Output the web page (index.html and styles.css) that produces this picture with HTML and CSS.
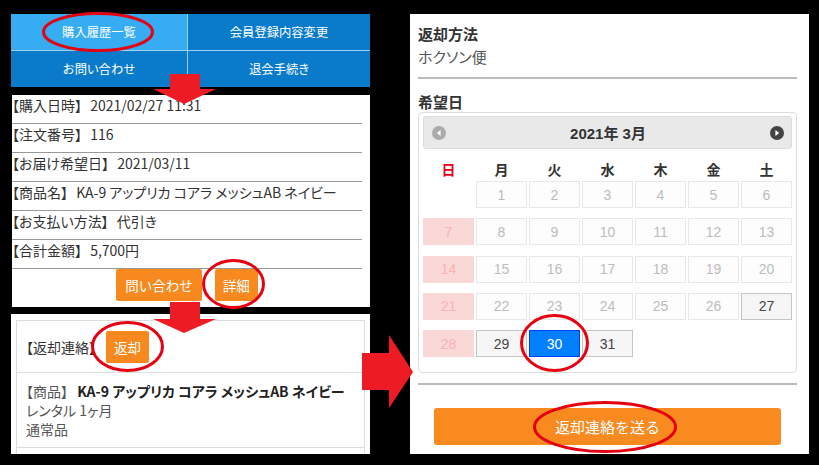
FILE: index.html
```html
<!DOCTYPE html>
<html lang="ja">
<head>
  <meta charset="UTF-8" />
  <meta name="viewport" content="width=device-width, initial-scale=1.0"/>
  <title>返却連絡の手順</title>
  <link rel="stylesheet" href="styles.css">
</head>
<body>
  <div class="page">
    <div class="left">
      <nav class="menu">
        <a class="menu-item is-current">購入履歴一覧</a>
        <a class="menu-item">会員登録内容変更</a>
        <a class="menu-item">お問い合わせ</a>
        <a class="menu-item">退会手続き</a>
      </nav>

      <section class="order">
        <ul class="order-list">
          <li>【購入日時】 <span>2021/02/27 11:31</span></li>
          <li>【注文番号】 <span>116</span></li>
          <li>【お届け希望日】 <span>2021/03/11</span></li>
          <li>【商品名】 <span>KA-9 アップリカ コアラ メッシュAB ネイビー</span></li>
          <li>【お支払い方法】 <span>代引き</span></li>
          <li>【合計金額】 <span>5,700円</span></li>
        </ul>
        <div class="order-actions">
          <button class="btn">問い合わせ</button>
          <button class="btn">詳細</button>
        </div>
      </section>

      <section class="return">
        <div class="return-box">
          <div class="return-head">
            <span>【返却連絡】</span>
            <button class="btn">返却</button>
          </div>
          <div class="return-item">
            <p>【商品】 <strong>KA-9 アップリカ コアラ メッシュAB ネイビー</strong></p>
            <p>レンタル 1ヶ月</p>
            <p>通常品</p>
          </div>
        </div>
      </section>
    </div>

    <section class="form">
      <h3 class="form-label">返却方法</h3>
      <p class="form-value">ホクソン便</p>
      <hr class="form-line">

      <h3 class="form-label">希望日</h3>
      <div class="calendar">
        <div class="cal-head">
          <span class="cal-nav is-off">
            <svg width="14" height="14" viewBox="0 0 14 14"><circle cx="7" cy="7" r="7" fill="#9c9c9c"/><path d="M8.6 4 L4.8 7 L8.6 10 Z" fill="#fff"/></svg>
          </span>
          <span class="cal-title">2021年 3月</span>
          <span class="cal-nav">
            <svg width="14" height="14" viewBox="0 0 14 14"><circle cx="7" cy="7" r="7" fill="#444"/><path d="M5.4 4 L9.2 7 L5.4 10 Z" fill="#fff"/></svg>
          </span>
        </div>
        <div class="cal-week">
          <span class="sun">日</span><span>月</span><span>火</span><span>水</span><span>木</span><span>金</span><span>土</span>
        </div>
        <div class="cal-days">
          <span class="day empty"></span>
          <span class="day off">1</span><span class="day off">2</span><span class="day off">3</span><span class="day off">4</span><span class="day off">5</span><span class="day off">6</span>
          <span class="day sunday">7</span>
          <span class="day off">8</span><span class="day off">9</span><span class="day off">10</span><span class="day off">11</span><span class="day off">12</span><span class="day off">13</span>
          <span class="day sunday">14</span>
          <span class="day off">15</span><span class="day off">16</span><span class="day off">17</span><span class="day off">18</span><span class="day off">19</span><span class="day off">20</span>
          <span class="day sunday">21</span>
          <span class="day off">22</span><span class="day off">23</span><span class="day off">24</span><span class="day off">25</span><span class="day off">26</span>
          <span class="day">27</span>
          <span class="day sunday">28</span>
          <span class="day">29</span>
          <span class="day selected">30</span>
          <span class="day">31</span>
        </div>
      </div>
      <hr class="form-line bottom">

      <button class="send">返却連絡を送る</button>
    </section>
  </div>

  <svg class="marks" width="819" height="465" viewBox="0 0 819 465">
    <g fill="#ed1c24">
      <polygon points="170,74 200,74 200,89 216,89 184,104 153,89 170,89"/>
      <polygon points="170,302 200,302 200,319 216,319 184,333 153,319 170,319"/>
      <polygon points="362,353 389,353 389,335 413,372 389,408 389,390 362,390"/>
    </g>
    <g fill="none" stroke="#e50012" stroke-width="3">
      <ellipse cx="98" cy="32" rx="54.5" ry="18.5"/>
      <ellipse cx="233.5" cy="284" rx="30" ry="23.5"/>
      <ellipse cx="127.5" cy="346.5" rx="35" ry="24"/>
      <ellipse cx="554.5" cy="343" rx="33" ry="27.5"/>
      <ellipse cx="605" cy="427" rx="70.5" ry="24.5"/>
    </g>
  </svg>
</body>
</html>
```

FILE: styles.css
```css
* {
  margin: 0;
  padding: 0;
  box-sizing: border-box;
}

body {
  width: 819px;
  height: 465px;
  background: #000;
  color: #333;
  font-family: "Noto Sans CJK JP", "Noto Sans", sans-serif;
  font-feature-settings: "palt";
  overflow: hidden;
  position: relative;
}

.page {
  display: flex;
  gap: 40px;
  padding: 14px 0 0 11px;
}

.left {
  width: 359px;
  display: flex;
  flex-direction: column;
}

/* top menu */
.menu {
  display: grid;
  grid-template-columns: 176px 1fr;
  grid-template-rows: 36px 36px;
  gap: 1px;
  background: #9bd0f2;
  height: 73px;
}

.menu-item {
  display: flex;
  align-items: center;
  justify-content: center;
  background: #0a7bcb;
  color: #fff;
  font-size: 12.3px;
}

.menu-item.is-current {
  background: #36acf3;
}

/* order detail */
.order {
  margin: 8px 0 0 1px;
  height: 212px;
  background: #fff;
  padding-right: 8px;
}

.order-list {
  list-style: none;
  font-size: 14px;
}

.order-list li {
  line-height: 20px;
  padding-bottom: 8px;
  border-bottom: 1px solid #999;
  white-space: nowrap;
}

.order-list span {
  margin-left: 5px;
}

.order-actions {
  display: flex;
  justify-content: center;
  gap: 13px;
}

.btn {
  height: 32px;
  padding: 0 9px;
  border: none;
  border-radius: 2px;
  background: #f7891f;
  color: #fff;
  font-family: inherit;
  font-size: 13.5px;
}

.order-actions .btn:last-child {
  padding: 0 8px;
}

/* return contact */
.return {
  margin-top: 7px;
  height: 140px;
  background: #fff;
  padding: 6px 5px 0;
  overflow: hidden;
}

.return-box {
  border: 1px solid #ddd;
  height: 200px;
  font-size: 14px;
}

.return-head {
  display: flex;
  align-items: center;
  gap: 10px;
  padding: 10px 9px 9px;
  border-bottom: 1px solid #ddd;
}

.return-head .btn {
  padding: 0 8px;
}

.return-item {
  padding: 9px 9px 8px;
  border-bottom: 1px solid #ddd;
  color: #555;
  line-height: 19px;
}

.return-item strong {
  color: #222;
  margin-left: 6px;
}

/* return form */
.form {
  width: 399px;
  height: 440px;
  background: #fff;
  padding: 10px 12px 0 8px;
}

.form-label {
  font-size: 15px;
  line-height: 20px;
  color: #333;
}

.form-value {
  font-size: 15px;
  line-height: 20px;
  margin-top: 3px;
  color: #555;
}

.form-line {
  border: none;
  height: 2px;
  background: #bbb;
  margin: 10px 0 13px;
}

.form-line.bottom {
  margin: 10px 0 23px;
}

.calendar {
  border: 1px solid #ddd;
  border-radius: 4px;
  padding: 3px 4px 15px;
  font-family: "Liberation Sans", "Noto Sans CJK JP", sans-serif;
}

.cal-head {
  height: 33px;
  display: flex;
  align-items: center;
  justify-content: space-between;
  padding: 0 7px 0 8px;
  background: #e9e9e9;
  border: 1px solid #ddd;
  border-radius: 3px;
}

.cal-nav {
  display: flex;
}

.cal-nav.is-off {
  opacity: 0.8;
}

.cal-title {
  font-weight: bold;
  font-size: 15px;
  color: #333;
}

.cal-week {
  display: grid;
  grid-template-columns: repeat(7, 1fr);
  gap: 2px;
  padding-top: 10px;
  line-height: 22px;
  text-align: center;
  font-weight: bold;
  font-size: 14px;
  color: #333;
}

.cal-week .sun {
  color: #e60012;
}

.cal-days {
  display: grid;
  grid-template-columns: repeat(7, 1fr);
  column-gap: 2px;
  row-gap: 10.25px;
}

.day {
  height: 27px;
  display: flex;
  align-items: center;
  justify-content: center;
  border: 1px solid #c5c5c5;
  background: #f6f6f6;
  color: #454545;
  font-size: 14px;
}

.day.empty {
  border-color: transparent;
  background: transparent;
}

.day.off {
  border-color: #e8e8e8;
  background: #fdfdfd;
  color: #bcbcbc;
}

.day.sunday {
  border-color: #fbd8d8;
  background: #fbd8d8;
  color: #f6b4b4;
}

.day.selected {
  border-color: #003eff;
  background: #007fff;
  color: #fff;
}

.send {
  display: block;
  width: calc(100% - 32px);
  margin: 0 auto;
  height: 37px;
  border: none;
  border-radius: 3px;
  background: #f98a1f;
  color: #fff;
  font-family: "Noto Sans CJK JP", sans-serif;
  font-size: 15px;
}

/* red marks over the screenshots */
.marks {
  position: absolute;
  top: 0;
  left: 0;
  pointer-events: none;
}
```
